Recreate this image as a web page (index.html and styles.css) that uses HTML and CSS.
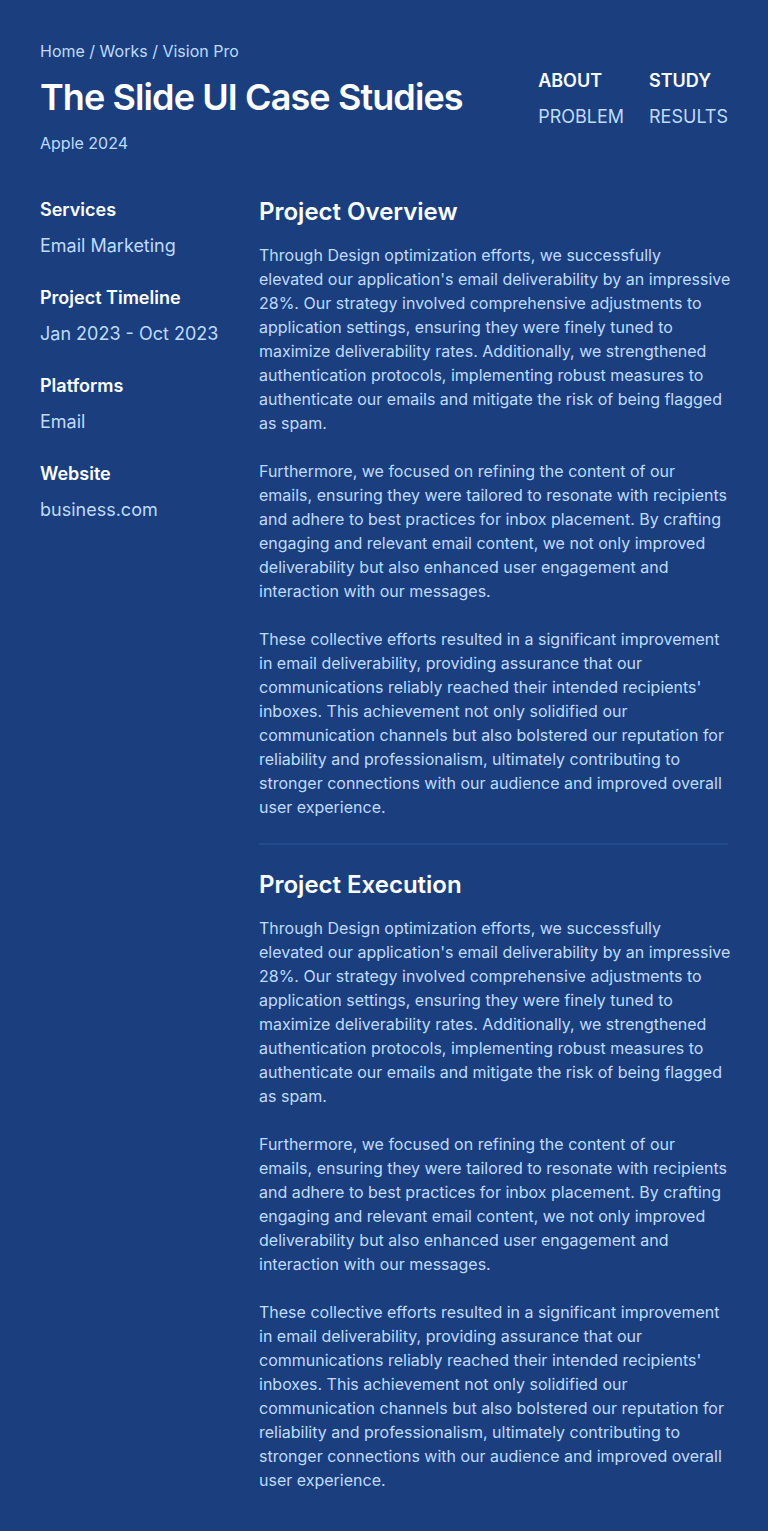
FILE: index.html
```html
<!DOCTYPE html>
<html lang="en">
<head>
<meta charset="utf-8">
<title>The Slide UI Case Studies</title>
<link rel="stylesheet" href="styles.css">
</head>
<body>
<div class="page">
  <header class="header">
    <div class="intro">
      <nav class="crumbs">Home / Works / Vision Pro</nav>
      <h1 class="title">The Slide UI Case Studies</h1>
      <p class="sub">Apple 2024</p>
    </div>
    <ul class="toc">
      <li class="toc-main">ABOUT</li>
      <li class="toc-main">STUDY</li>
      <li class="toc-sub">PROBLEM</li>
      <li class="toc-sub">RESULTS</li>
    </ul>
  </header>
  <div class="body">
    <aside class="meta">
      <div class="meta-item"><div class="meta-label">Services</div><div class="meta-value">Email Marketing</div></div>
      <div class="meta-item"><div class="meta-label">Project Timeline</div><div class="meta-value">Jan 2023 - Oct 2023</div></div>
      <div class="meta-item"><div class="meta-label">Platforms</div><div class="meta-value">Email</div></div>
      <div class="meta-item"><div class="meta-label">Website</div><div class="meta-value">business.com</div></div>
    </aside>
    <main class="main">
      <section class="section">
        <h2 class="section-title">Project Overview</h2>
        <p>Through Design optimization efforts, we successfully<br>elevated our application's email deliverability by an impressive 28%. Our strategy involved comprehensive adjustments to application settings, ensuring they were finely tuned to maximize deliverability rates. Additionally, we strengthened authentication protocols, implementing robust measures to authenticate our emails and mitigate the risk of being flagged as spam.</p>
        <p>Furthermore, we focused on refining the content of our emails, ensuring they were tailored to resonate with recipients and adhere to best practices for inbox placement. By crafting engaging and relevant email content, we not only improved deliverability but also enhanced user engagement and interaction with our messages.</p>
        <p>These collective efforts resulted in a significant improvement in email deliverability, providing assurance that our communications reliably reached their intended recipients' inboxes. This achievement not only solidified our communication channels but also bolstered our reputation for reliability and professionalism, ultimately contributing to stronger connections with our audience and improved overall user experience.</p>
      </section>
      <hr class="divider">
      <section class="section">
        <h2 class="section-title">Project Execution</h2>
        <p>Through Design optimization efforts, we successfully<br>elevated our application's email deliverability by an impressive 28%. Our strategy involved comprehensive adjustments to application settings, ensuring they were finely tuned to maximize deliverability rates. Additionally, we strengthened authentication protocols, implementing robust measures to authenticate our emails and mitigate the risk of being flagged as spam.</p>
        <p>Furthermore, we focused on refining the content of our emails, ensuring they were tailored to resonate with recipients and adhere to best practices for inbox placement. By crafting engaging and relevant email content, we not only improved deliverability but also enhanced user engagement and interaction with our messages.</p>
        <p>These collective efforts resulted in a significant improvement in email deliverability, providing assurance that our communications reliably reached their intended recipients' inboxes. This achievement not only solidified our communication channels but also bolstered our reputation for reliability and professionalism, ultimately contributing to stronger connections with our audience and improved overall user experience.</p>
      </section>
    </main>
  </div>
</div>
</body>
</html>
```

FILE: styles.css
```css
* { box-sizing: border-box; }
html, body {
  margin: 0;
  padding: 0;
  background: #1b3f7e;
}
body {
  font-family: Inter, "Noto Sans", sans-serif;
  color: #bfdbfe;
  -webkit-font-smoothing: antialiased;
}
.page {
  padding: 39px 40px 40px;
  min-height: 1531px;
}
.header {
  display: flex;
  justify-content: space-between;
  align-items: flex-start;
}
.crumbs {
  font-size: 16px;
  line-height: 24px;
  color: #bfdbfe;
}
.title {
  margin: 14px 0 0;
  font-size: 36px;
  line-height: 40px;
  font-weight: 600;
  color: #ffffff;
  letter-spacing: -0.025em;
}
.sub {
  margin: 14px 0 0;
  font-size: 16px;
  line-height: 24px;
  color: #bfdbfe;
}
.toc {
  list-style: none;
  margin: 30px 0 0;
  padding: 0;
  display: grid;
  grid-template-columns: auto auto;
  column-gap: 25px;
  row-gap: 12px;
  font-size: 18px;
  line-height: 24px;
}
.toc-main {
  color: #ffffff;
  font-weight: 600;
}
.toc-sub {
  color: #bfdbfe;
}
.body {
  display: grid;
  grid-template-columns: 187px 1fr;
  column-gap: 32px;
  margin-top: 41px;
}
.meta {
  display: flex;
  flex-direction: column;
  gap: 24px;
}
.meta-label {
  font-size: 18px;
  line-height: 28px;
  font-weight: 600;
  color: #ffffff;
}
.meta-value {
  margin-top: 8px;
  font-size: 18px;
  line-height: 28px;
  color: #bfdbfe;
}
.main {
  min-width: 0;
}
.section-title {
  margin: 0 0 15px;
  font-size: 24px;
  line-height: 32px;
  font-weight: 600;
  color: #ffffff;
}
.section p {
  margin: 0 -4px 24px 0;
  font-size: 16px;
  line-height: 24px;
  color: #bfdbfe;
}
.section p:last-child {
  margin-bottom: 0;
}
.divider {
  margin: 24px 0;
  border: 0;
  height: 2px;
  background: #234c8f;
}
```
